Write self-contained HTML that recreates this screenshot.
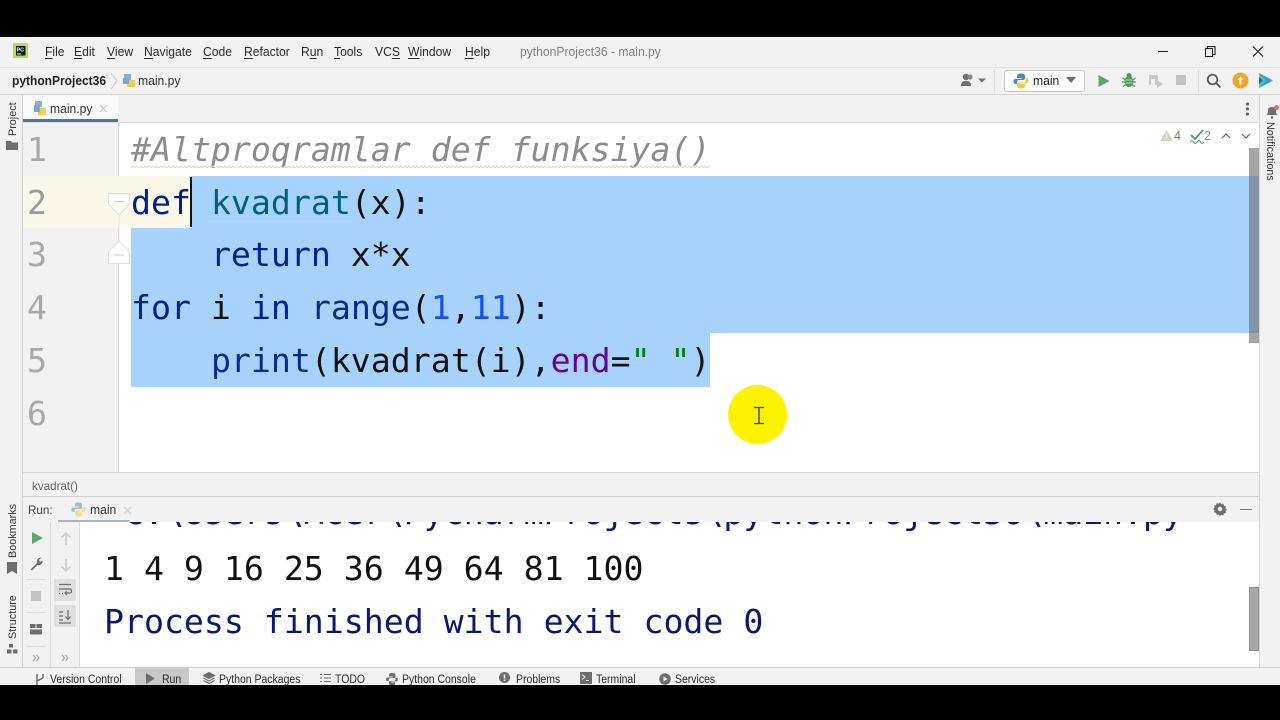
<!DOCTYPE html>
<html><head><meta charset="utf-8">
<style>
html,body{margin:0;padding:0;background:#000;}
#p{position:relative;width:1280px;height:720px;overflow:hidden;background:#000;font-family:"Liberation Sans",sans-serif;color:#222;}
.a{position:absolute;}
.t{position:absolute;white-space:pre;font-size:12.5px;line-height:16px;color:#2a2a2a;transform-origin:0 0;transform:scaleX(.97);}
.bt{transform:scaleX(.91);font-size:11.5px;top:0;}
.m{position:absolute;white-space:pre;font-family:"DejaVu Sans Mono","Liberation Mono",monospace;font-size:33.2px;line-height:40px;left:131px;color:#111;}
.n{position:absolute;white-space:pre;font-family:"DejaVu Sans Mono","Liberation Mono",monospace;font-size:33.2px;line-height:40px;left:27px;color:#a9a9a9;}
.k{color:#00208f}.f{color:#00627a}.b{color:#0a2a88}.d{color:#1750eb}.p{color:#660099}.s{color:#067d17}
u{text-decoration-thickness:1px;text-underline-offset:2px}
svg{position:absolute;overflow:visible}
.v{position:absolute;white-space:pre;font-size:10.8px;color:#333;transform-origin:0 0;transform:rotate(-90deg);}
</style></head><body><div id="p">
<div class="a" style="left:0;top:37px;width:1280px;height:648px;background:#f2f2f2"></div>

<!-- title bar -->
<svg style="left:13px;top:43px" width="16" height="16"><rect width="15" height="15" x="0" fill="#b6e04a"/><rect x="3" y="3" width="9.500" height="9.500" fill="#0c1a10"/><text x="3.500" y="8.500" font-size="5.500" font-weight="bold" fill="#fff" font-family="Liberation Sans">PC</text><rect x="4" y="10.500" width="4" height="1" fill="#fff"/></svg>
<div class="t" style="left:45px;top:44px"><u>F</u>ile</div>
<div class="t" style="left:74px;top:44px"><u>E</u>dit</div>
<div class="t" style="left:107px;top:44px"><u>V</u>iew</div>
<div class="t" style="left:144px;top:44px"><u>N</u>avigate</div>
<div class="t" style="left:203px;top:44px"><u>C</u>ode</div>
<div class="t" style="left:244px;top:44px"><u>R</u>efactor</div>
<div class="t" style="left:301px;top:44px">R<u>u</u>n</div>
<div class="t" style="left:334px;top:44px"><u>T</u>ools</div>
<div class="t" style="left:375px;top:44px">VC<u>S</u></div>
<div class="t" style="left:408px;top:44px"><u>W</u>indow</div>
<div class="t" style="left:465px;top:44px"><u>H</u>elp</div>
<div class="t" style="left:520px;top:44px;color:#808080">pythonProject36 - main.py</div>
<svg style="left:1155px;top:44px" width="110" height="16" fill="none" stroke="#222" stroke-width="1.100"><path d="M3 7.500H13"/><rect x="50.500" y="4.500" width="7" height="8"/><path d="M52.500 4.500V2.500H60V10.500H57.500"/><path d="M98 2.500L108 12.500M108 2.500L98 12.500"/></svg>

<!-- nav bar -->
<div class="a" style="left:0;top:67px;width:1280px;height:1px;background:#e2e2e2"></div>
<div class="t" style="left:12px;top:73px;font-weight:bold;color:#222;transform:scaleX(.96)">pythonProject36</div>
<svg style="left:110px;top:72px" width="10" height="18" fill="none" stroke="#c8c8c8"><path d="M1 1L7 9L1 17"/></svg>
<svg style="left:122px;top:73px" width="15" height="15"><path d="M2 1h7v6H2z" fill="#8fb3c9"/><path d="M5 7h8v7H5z" fill="#f2c94c" opacity=".9"/><path d="M1 5h6v6H1z" fill="#7fa8c4"/></svg>
<div class="t" style="left:138px;top:73px;color:#333">main.py</div>

<svg style="left:960px;top:72px" width="30" height="16"><circle cx="6" cy="5" r="3.200" fill="#6e6e6e"/><path d="M1 14c0-4 2-5 5-5s5 1 5 5z" fill="#6e6e6e"/><circle cx="10" cy="5" r="2.600" fill="#8a8a8a"/><path d="M18 6.500h8l-4 4z" fill="#6e6e6e"/></svg>
<div class="a" style="left:994px;top:70px;width:1px;height:22px;background:#dcdcdc"></div>
<div class="a" style="left:1004px;top:70px;width:79px;height:20px;background:#fff;border:1px solid #c9c9c9;border-radius:3px"></div>
<svg style="left:1013px;top:73px" width="16" height="16"><path d="M8 0.500c-3 0-4 1-4 3V5h4.500v1H2.500C1 6 0.500 7.500 0.500 8.500S1 11 2.500 11H4V9c0-1.500 1-2 2-2h4c1 0 2-.5 2-2V3.500c0-2-1.500-3-4-3z" fill="#4b8bbe"/><path d="M8 15.500c3 0 4-1 4-3V11H7.500v-1h6c1.500 0 2-1.500 2-2.500S15 5 13.500 5H12.500v2c0 1.500-1 2.500-2 2.500H6c-1 0-2 .5-2 2v1c0 2 1.500 3 4 3z" fill="#f5c842"/></svg>
<div class="t" style="left:1033px;top:73px;color:#222">main</div>
<svg style="left:1065px;top:76px" width="12" height="8"><path d="M1 1h10l-5 6z" fill="#6e6e6e"/></svg>
<svg style="left:1097px;top:73px" width="14" height="16"><path d="M1.500 2L12.500 8L1.500 14z" fill="#59a869"/></svg>
<svg style="left:1121px;top:72px" width="16" height="16"><ellipse cx="8" cy="9.500" rx="4.500" ry="5.500" fill="#499c54"/><circle cx="8" cy="3.500" r="2.500" fill="#499c54"/><path d="M1.500 6l3 2M14.500 6l-3 2M1 10h3M15 10h-3M2 14.500l3-2M14 14.500l-3-2" stroke="#499c54" stroke-width="1.200"/><path d="M4.500 8h7M4.500 11h7" stroke="#dff0e2" stroke-width=".8"/></svg>
<svg style="left:1148px;top:73px" width="16" height="16"><path d="M1 2h8l1 1v9H7V6H3v6H1z" fill="#c4c9c9"/><path d="M9 7l6 4-6 4z" fill="#c4c9c9"/></svg>
<div class="a" style="left:1176px;top:75px;width:10px;height:10px;background:#c4c4c4"></div>
<div class="a" style="left:1198px;top:70px;width:1px;height:22px;background:#dcdcdc"></div>
<svg style="left:1206px;top:73px" width="16" height="16" fill="none" stroke="#555" stroke-width="1.700"><circle cx="6.500" cy="6.500" r="4.800"/><path d="M10 10L14.500 14.500"/></svg>
<svg style="left:1232px;top:72px" width="17" height="17"><circle cx="8.500" cy="8.500" r="8" fill="#f0a42a"/><path d="M8.500 4.500L5.500 8h2v4.500h2V8h2z" fill="#fff"/></svg>
<svg style="left:1258px;top:72px" width="16" height="17"><path d="M1 1L15 8.500L1 16z" fill="#2f9fd8"/><path d="M1 1L8 8.500L1 16z" fill="#58c78a"/><path d="M1 5L5 8.500L1 12z" fill="#0d6fb8"/></svg>
<div class="a" style="left:0;top:94px;width:1280px;height:1px;background:#d4d4d4"></div>

<!-- left stripe -->
<div class="a" style="left:22px;top:95px;width:1px;height:572px;background:#d2d2d2"></div>
<div class="v" style="left:7px;top:136px;">Project</div>
<svg style="left:6px;top:140px" width="12" height="11"><path d="M0 1h5l1 1.500h6V10H0z" fill="#6e6e6e"/></svg>
<div class="v" style="left:7px;top:558px;">Bookmarks</div>
<svg style="left:7px;top:562px" width="10" height="12"><path d="M0 0h10v12L5 9 0 12z" fill="#6e6e6e"/></svg>
<div class="v" style="left:7px;top:639px;">Structure</div>
<svg style="left:7px;top:644px" width="11" height="10"><rect x="2" y="0" width="4" height="3.500" fill="#6e6e6e"/><rect x="0" y="5.500" width="4.500" height="4" fill="#6e6e6e"/><rect x="6" y="5.500" width="4.500" height="4" fill="#6e6e6e"/></svg>

<!-- right stripe -->
<div class="a" style="left:1259px;top:95px;width:1px;height:572px;background:#d8d8d8"></div>
<svg style="left:1265px;top:104px" width="14" height="16"><path d="M1 11c2-1 2-3 2-5s2-3 4-3 4 1 4 3 0 4 2 5z" fill="#6e6e6e"/><circle cx="7" cy="13.500" r="1.300" fill="#6e6e6e"/><circle cx="11.500" cy="3.500" r="2.500" fill="#e0697b"/></svg>
<div class="a" style="left:1263px;top:122px;font-size:10.800px;color:#333;writing-mode:vertical-rl;line-height:14px;white-space:pre">Notifications</div>

<!-- tab bar -->
<div class="a" style="left:23px;top:95px;width:95px;height:27px;background:#fafafa"></div>
<div class="a" style="left:23px;top:119px;width:95px;height:3px;background:#4a7a9f"></div>
<div class="a" style="left:23px;top:122px;width:1236px;height:1px;background:#dcdcdc"></div>
<svg style="left:33px;top:100px" width="15" height="16"><path d="M2 1h7v6H2z" fill="#8fb3c9"/><path d="M5 8h8v7H5z" fill="#f2c94c" opacity=".9"/><path d="M1 5h6v7H1z" fill="#7fa8c4"/></svg>
<div class="t" style="left:50px;top:101px;color:#333">main.py</div>
<svg style="left:99px;top:104px" width="9" height="9" stroke="#c0c0c0" fill="none"><path d="M1 1L8 8M8 1L1 8"/></svg>
<svg style="left:1241px;top:101px" width="12" height="16"><circle cx="6.500" cy="3" r="1.500" fill="#5c5c5c"/><circle cx="6.500" cy="8" r="1.500" fill="#5c5c5c"/><circle cx="6.500" cy="13" r="1.500" fill="#5c5c5c"/></svg>

<!-- editor -->
<div class="a" style="left:23px;top:123px;width:95px;height:349px;background:#f2f2f2"></div>
<div class="a" style="left:118px;top:123px;width:1px;height:349px;background:#d8d8d8"></div>
<div class="a" style="left:119px;top:123px;width:1140px;height:349px;background:#fff"></div>
<div class="a" style="left:23px;top:176px;width:168px;height:52px;background:#fbf8ea"></div>
<div class="a" style="left:191px;top:176px;width:1068px;height:52px;background:#a6d2fb"></div>
<div class="a" style="left:131px;top:228px;width:1128px;height:105px;background:#a6d2fb"></div>
<div class="a" style="left:131px;top:333px;width:579px;height:54px;background:#a6d2fb"></div>

<div class="n" style="top:130px">1</div>
<div class="n" style="top:183px;color:#9a9a9a">2</div>
<div class="n" style="top:235px">3</div>
<div class="n" style="top:288px">4</div>
<div class="n" style="top:341px">5</div>
<div class="n" style="top:394px">6</div>

<svg style="left:105px;top:190px" width="28" height="78" fill="#fbfbfb" stroke="#dedede"><path d="M3.500 3.500H24.500V14L14 25 3.500 14z" /><path d="M9 11.500H19" stroke="#cfcfcf"/><path d="M3.500 73.500V62L14 51 24.500 62V73.500z" fill="#fff"/><path d="M9 65H19" stroke="#cfcfcf"/><path d="M14 25V51" stroke="#e4e4e4"/></svg>

<div class="m" style="top:130px;font-style:italic;color:#8c8c8c">#Altproqramlar def funksiya()</div>
<svg style="left:131px;top:165px" width="579" height="4"><defs><pattern id="w" width="4" height="4" patternUnits="userSpaceOnUse"><path d="M0 3L2 1L4 3" fill="none" stroke="#d6d6c8" stroke-width="1"/></pattern></defs><rect width="579" height="4" fill="url(#w)"/></svg>
<div class="m" style="top:183px"><span class="k">def</span> <span class="f">kvadrat</span>(x):</div>
<div class="a" style="left:190px;top:177px;width:2px;height:50px;background:#111"></div>
<div class="a" style="left:208px;top:221px;width:143px;height:1px;background:#b6d6ec"></div>
<div class="m" style="top:235px">    <span class="k">return</span> x*x</div>
<div class="m" style="top:288px"><span class="k">for</span> i <span class="k">in</span> <span class="b">range</span>(<span class="d">1</span>,<span class="d">11</span>):</div>
<div class="m" style="top:341px">    <span class="b">print</span>(kvadrat(i),<span class="p">end</span>=<span class="s">" "</span>)</div>

<!-- markers -->
<svg style="left:1160px;top:129px" width="14" height="13"><path d="M6.500 1L13 12H0z" fill="#d9d4b4"/><path d="M6.500 5v4" stroke="#fff" stroke-width="1.200"/></svg>
<div class="t" style="left:1174px;top:128px;color:#808080;font-size:13px">4</div>
<svg style="left:1189px;top:129px" width="16" height="15" fill="none" stroke="#5aa469" stroke-width="2"><path d="M2 6L6 10L14 1"/><path d="M1 13c1.500-2 2.500-2 3.500 0s2 2 3.500 0 2.500-2 3.500 0 2 2 3.500 0" stroke-width="1"/></svg>
<div class="t" style="left:1204px;top:128px;color:#909090;font-size:13px">2</div>
<svg style="left:1221px;top:132px" width="30" height="8" fill="none" stroke="#666" stroke-width="1.200"><path d="M1 6L5 2L9 6"/><path d="M21 2L25 6L29 2"/></svg>
<div class="a" style="left:1249px;top:148px;width:10px;height:195px;background:rgba(110,110,110,.62)"></div>

<!-- yellow highlight -->
<div class="a" style="left:728px;top:385px;width:59px;height:59px;border-radius:50%;background:#fdf300"></div>
<svg style="left:753px;top:406px" width="12" height="20" fill="none" stroke="#333" stroke-width="1.300"><path d="M1 1.500H11M1 17.500H11M6 1.500V17.500" /></svg>

<!-- breadcrumbs -->
<div class="a" style="left:23px;top:472px;width:1236px;height:1px;background:#d8d8d8"></div>
<div class="t" style="left:32px;top:478px;font-size:12px;color:#666">kvadrat()</div>
<div class="a" style="left:23px;top:496px;width:1236px;height:1px;background:#d4d4d4"></div>

<!-- run header -->
<div class="t" style="left:28px;top:502px;font-size:12px;color:#444">Run:</div>
<svg style="left:71px;top:502px" width="15" height="15"><path d="M7.500 0.500c-3 0-3.500 1-3.500 2.500V4.500h4v1H2C.8 5.500.3 6.700.3 7.800S.8 10 2 10H3.500V8.500C3.500 7.500 4.500 7 5.500 7h4c1 0 1.500-.5 1.500-1.500V3c0-1.500-1-2.500-3.500-2.500z" fill="#9cc0d8"/><path d="M7.500 14.500c3 0 3.500-1 3.500-2.500V10.500H7v-1h6c1.200 0 1.700-1.200 1.700-2.300S14.200 5 13 5H11.500V6.500c0 1-1 1.500-2 1.500h-4c-1 0-1.500.5-1.500 1.500V12c0 1.500 1 2.500 3.500 2.500z" fill="#f3e08a"/></svg>
<div class="t" style="left:90px;top:502px;font-size:12.500px;color:#333">main</div>
<svg style="left:123px;top:506px" width="9" height="9" stroke="#cfcfcf" fill="none"><path d="M1 1L8 8M8 1L1 8"/></svg>
<div class="a" style="left:58px;top:520px;width:72px;height:2px;background:#aab3bb"></div>
<svg style="left:1213px;top:502px" width="14" height="14"><path d="M7 0.500l1.300 1.700 2-.7.600 2.100 2.100.6-.7 2 1.700 1.300-1.700 1.300.7 2-2.100.6-.6 2.100-2-.7L7 14l-1.300-1.700-2 .7-.6-2.100-2.100-.6.7-2L0 7l1.700-1.300-.7-2 2.100-.6.6-2.100 2 .7z" fill="#6e6e6e"/><circle cx="7" cy="7" r="2.200" fill="#f2f2f2"/></svg>
<div class="a" style="left:1240px;top:509px;width:12px;height:1px;background:#777"></div>

<!-- console -->
<div class="a" style="left:79px;top:522px;width:1180px;height:145px;background:#fff"></div>
<div class="a" style="left:50px;top:522px;width:1px;height:145px;background:#dcdcdc"></div>
<div class="a" style="left:79px;top:522px;width:1px;height:145px;background:#dcdcdc"></div>
<div class="a" style="left:79px;top:522px;width:1180px;height:145px;overflow:hidden">
  <div class="m" style="left:45px;top:-29px;color:#0a1a6b">C:\Users\Acer\PycharmProjects\pythonProject36\main.py</div>
  <div class="m" style="left:25px;top:27px;color:#111">1 4 9 16 25 36 49 64 81 100</div>
  <div class="m" style="left:25px;top:80px;color:#0a1a6b">Process finished with exit code 0</div>
</div>
<div class="a" style="left:1249px;top:587px;width:10px;height:64px;background:#a6a6a6;box-sizing:border-box;border:1px solid #909090"></div>

<!-- run tools -->
<svg style="left:30px;top:531px" width="14" height="14"><path d="M2 1L13 7L2 13z" fill="#59a869"/></svg>
<svg style="left:29px;top:556px" width="15" height="15"><path d="M1.500 13.500L8 7c-.8-2.500.8-5.500 4.500-5.500L10 4l1 2 2.500-1.500c.5 3.500-3 5.500-5 4.500L3 14.500z" fill="#6e6e6e"/></svg>
<div class="a" style="left:26px;top:579px;width:20px;height:1px;background:#dcdcdc"></div>
<div class="a" style="left:31px;top:591px;width:10px;height:10px;background:#c4c4c4"></div>
<div class="a" style="left:26px;top:612px;width:20px;height:1px;background:#dcdcdc"></div>
<svg style="left:30px;top:624px" width="12" height="11"><rect x="0" y="0" width="5.500" height="4" fill="#6e6e6e"/><rect x="6.500" y="0" width="5.500" height="4" fill="#6e6e6e"/><rect x="0" y="5.500" width="12" height="5" fill="#6e6e6e"/></svg>
<div class="a" style="left:26px;top:646px;width:20px;height:1px;background:#dcdcdc"></div>
<svg style="left:32px;top:654px" width="40" height="8" fill="none" stroke="#a0a0a0"><path d="M1 1L3.500 4L1 7M4.500 1L7 4L4.500 7M30 1L32.500 4L30 7M33.500 1L36 4L33.500 7"/></svg>
<svg style="left:59px;top:531px" width="14" height="50" fill="none" stroke="#c8c8c8" stroke-width="1.500"><path d="M7 14V2M2.500 6.500L7 2L11.500 6.500"/><path d="M7 28V40M2.500 35.500L7 40L11.500 35.500"/></svg>
<div class="a" style="left:54px;top:579px;width:22px;height:22px;background:#dfdfdf;border-radius:2px"></div>
<div class="a" style="left:54px;top:605px;width:22px;height:22px;background:#dfdfdf;border-radius:2px"></div>
<svg style="left:58px;top:583px" width="14" height="14" fill="none" stroke="#6e6e6e" stroke-width="1.200"><path d="M1 1.500H13M1 6H12c2 0 2 4 0 4H7M9 8L7 10L9 12M1 10.500H2M4 10.500H5"/></svg>
<svg style="left:58px;top:609px" width="14" height="15" fill="none" stroke="#6e6e6e" stroke-width="1.200"><path d="M1 3H5M1 7H5M1 11H5M1 14H13M10 1V10M7.500 7.500L10 10.500L12.500 7.500" /></svg>

<!-- bottom bar -->
<div class="a" style="left:0;top:667px;width:1280px;height:1px;background:#d2d2d2"></div>
<div class="a" style="left:135px;top:668px;width:54px;height:17px;background:#c9c9c9"></div>
<div class="a" style="left:0;top:672px;width:1280px;height:13px;overflow:hidden">
  <div class="t bt" style="left:50px">Version Control</div>
  <div class="t bt" style="left:162px">Run</div>
  <div class="t bt" style="left:219px">Python Packages</div>
  <div class="t bt" style="left:335px">TODO</div>
  <div class="t bt" style="left:402px">Python Console</div>
  <div class="t bt" style="left:516px">Problems</div>
  <div class="t bt" style="left:596px">Terminal</div>
  <div class="t bt" style="left:675px">Services</div>
  <svg style="left:35px;top:1px" width="10" height="13" fill="none" stroke="#6e6e6e" stroke-width="1.500"><path d="M2 1V12M8 1V4C8 6 5 6 2 8"/></svg>
  <svg style="left:146px;top:1px" width="10" height="12"><path d="M0 0L9 5.500L0 11z" fill="#6e6e6e"/></svg>
  <svg style="left:203px;top:0" width="12" height="13" fill="none" stroke="#6e6e6e" stroke-width="1.200"><path d="M6 .5L11.500 3.500L6 6.500L.5 3.500z" fill="#6e6e6e"/><path d="M.5 6L6 9L11.500 6M.5 8.500L6 11.500L11.500 8.500"/></svg>
  <svg style="left:320px;top:2px" width="11" height="10" fill="none" stroke="#6e6e6e"><path d="M0 .5H2M4 .5H11M0 4H2M4 4H11M0 7.500H2M4 7.500H11"/></svg>
  <svg style="left:386px;top:1px" width="12" height="12"><path d="M6 0C3.500 0 3 1 3 2V3.500H6.500V4.500H1.500C.5 4.500 0 5.500 0 6.500S.5 8 1.500 8H3V6.500C3 5.500 4 5 5 5H8C9 5 9.500 4.500 9.500 3.500V2C9.500 1 8.500 0 6 0z" fill="#6e6e6e"/><path d="M6 13C8.500 13 9 12 9 11V9.500H5.500V8.500H10.500C11.500 8.500 12 7.500 12 6.500S11.500 5 10.500 5H9.500V6.500C9.500 7.500 8.500 8 7.500 8H4.500C3.500 8 3 8.500 3 9.500V11C3 12 3.500 13 6 13z" fill="#6e6e6e"/></svg>
  <svg style="left:499px;top:0" width="11" height="12"><circle cx="5.500" cy="5.500" r="5.500" fill="#6e6e6e"/><path d="M5.500 2.500V6.500M5.500 7.500V9" stroke="#f2f2f2" stroke-width="1.500"/></svg>
  <svg style="left:580px;top:0" width="12" height="12"><rect width="12" height="12" fill="#6e6e6e"/><path d="M2 2.500L5 5L2 7.500M6 8.500H9" stroke="#f2f2f2" fill="none"/></svg>
  <svg style="left:659px;top:1px" width="12" height="12"><circle cx="6" cy="6" r="5.800" fill="#6e6e6e"/><path d="M4.500 3.500L8.500 6L4.500 8.500z" fill="#f2f2f2"/></svg>
</div>
<div class="a" style="left:0;top:685px;width:1280px;height:35px;background:#000"></div>
</div></body></html>
